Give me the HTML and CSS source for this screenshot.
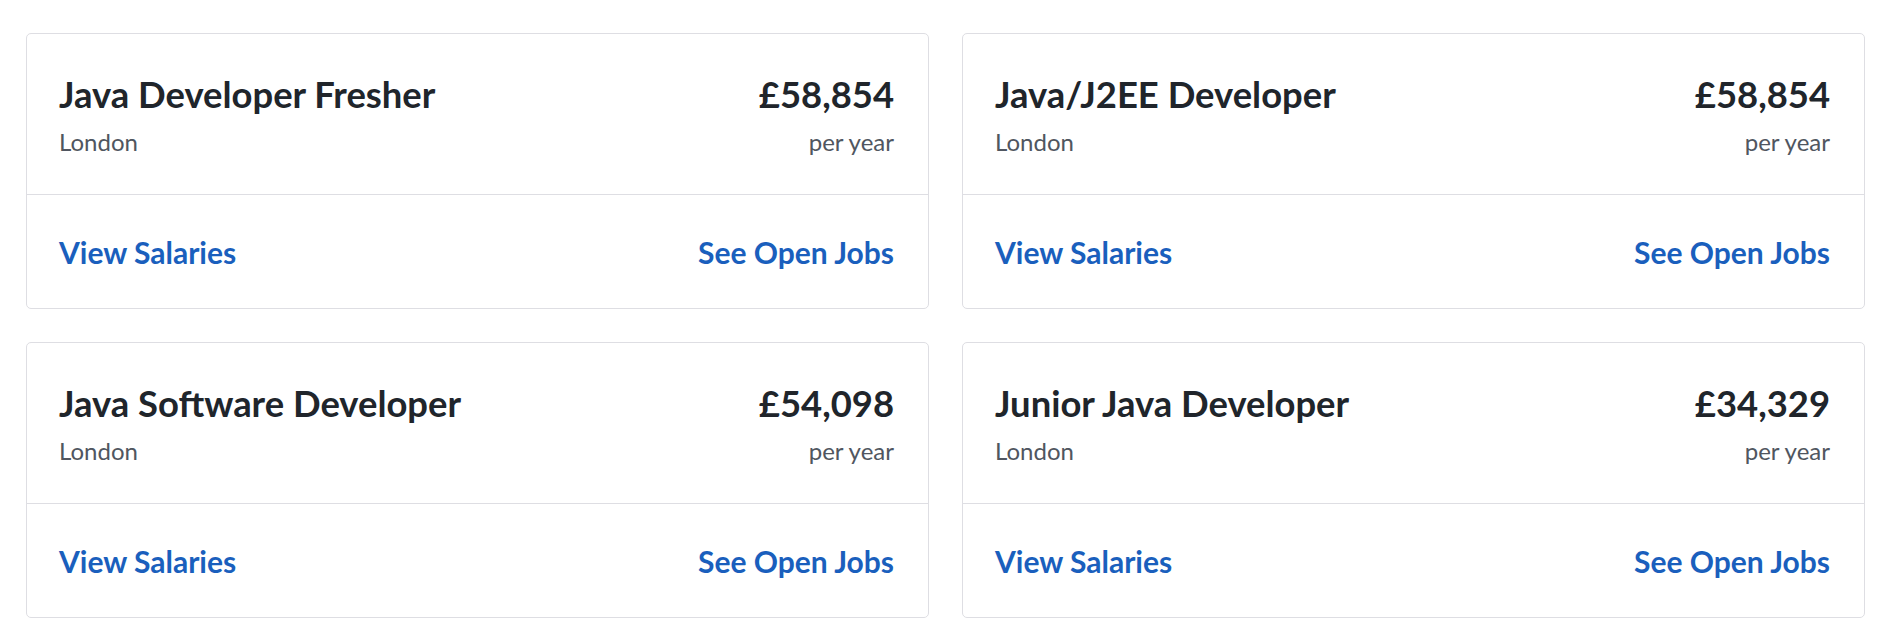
FILE: index.html
```html
<!DOCTYPE html>
<html lang="en">
<head>
<meta charset="utf-8">
<title>Salaries</title>
<link rel="stylesheet" href="styles.css">
</head>
<body>
<div class="grid">
  <div class="card">
    <div class="card-top">
      <div class="info">
        <div class="title">Java Developer Fresher</div>
        <div class="sub">London</div>
      </div>
      <div class="pay">
        <div class="title">£58,854</div>
        <div class="sub">per year</div>
      </div>
    </div>
    <div class="card-bottom">
      <a class="link" href="#">View Salaries</a>
      <a class="link" href="#">See Open Jobs</a>
    </div>
  </div>
  <div class="card">
    <div class="card-top">
      <div class="info">
        <div class="title">Java/J2EE Developer</div>
        <div class="sub">London</div>
      </div>
      <div class="pay">
        <div class="title">£58,854</div>
        <div class="sub">per year</div>
      </div>
    </div>
    <div class="card-bottom">
      <a class="link" href="#">View Salaries</a>
      <a class="link" href="#">See Open Jobs</a>
    </div>
  </div>
  <div class="card">
    <div class="card-top">
      <div class="info">
        <div class="title">Java Software Developer</div>
        <div class="sub">London</div>
      </div>
      <div class="pay">
        <div class="title">£54,098</div>
        <div class="sub">per year</div>
      </div>
    </div>
    <div class="card-bottom">
      <a class="link" href="#">View Salaries</a>
      <a class="link" href="#">See Open Jobs</a>
    </div>
  </div>
  <div class="card">
    <div class="card-top">
      <div class="info">
        <div class="title">Junior Java Developer</div>
        <div class="sub">London</div>
      </div>
      <div class="pay">
        <div class="title">£34,329</div>
        <div class="sub">per year</div>
      </div>
    </div>
    <div class="card-bottom">
      <a class="link" href="#">View Salaries</a>
      <a class="link" href="#">See Open Jobs</a>
    </div>
  </div>
</div>
</body>
</html>
```
FILE: styles.css
```css
html, body {
  margin: 0;
  padding: 0;
  background: #ffffff;
}
body {
  font-family: Lato, "Noto Sans", sans-serif;
}
.grid {
  display: grid;
  grid-template-columns: 1fr 1fr;
  column-gap: 33px;
  row-gap: 33px;
  padding: 33px 21px 0 26px;
}
.card {
  border: 1px solid #dedee3;
  border-radius: 5px;
  background: #fff;
}
.card-top {
  display: flex;
  justify-content: space-between;
  padding: 38px 34px 37px 32px;
  border-bottom: 1px solid #dedee3;
}
.pay {
  text-align: right;
}
.title {
  font-size: 36.4px;
  font-weight: 700;
  line-height: 44px;
  color: #20252b;
}
.sub {
  margin-top: 11px;
  font-size: 24px;
  line-height: 30px;
  color: #505660;
}
.card-bottom {
  display: flex;
  justify-content: space-between;
  padding: 39px 34px 38px 32px;
}
.link {
  font-size: 30px;
  font-weight: 700;
  line-height: 36px;
  color: #1a5fbd;
  text-decoration: none;
}
```
